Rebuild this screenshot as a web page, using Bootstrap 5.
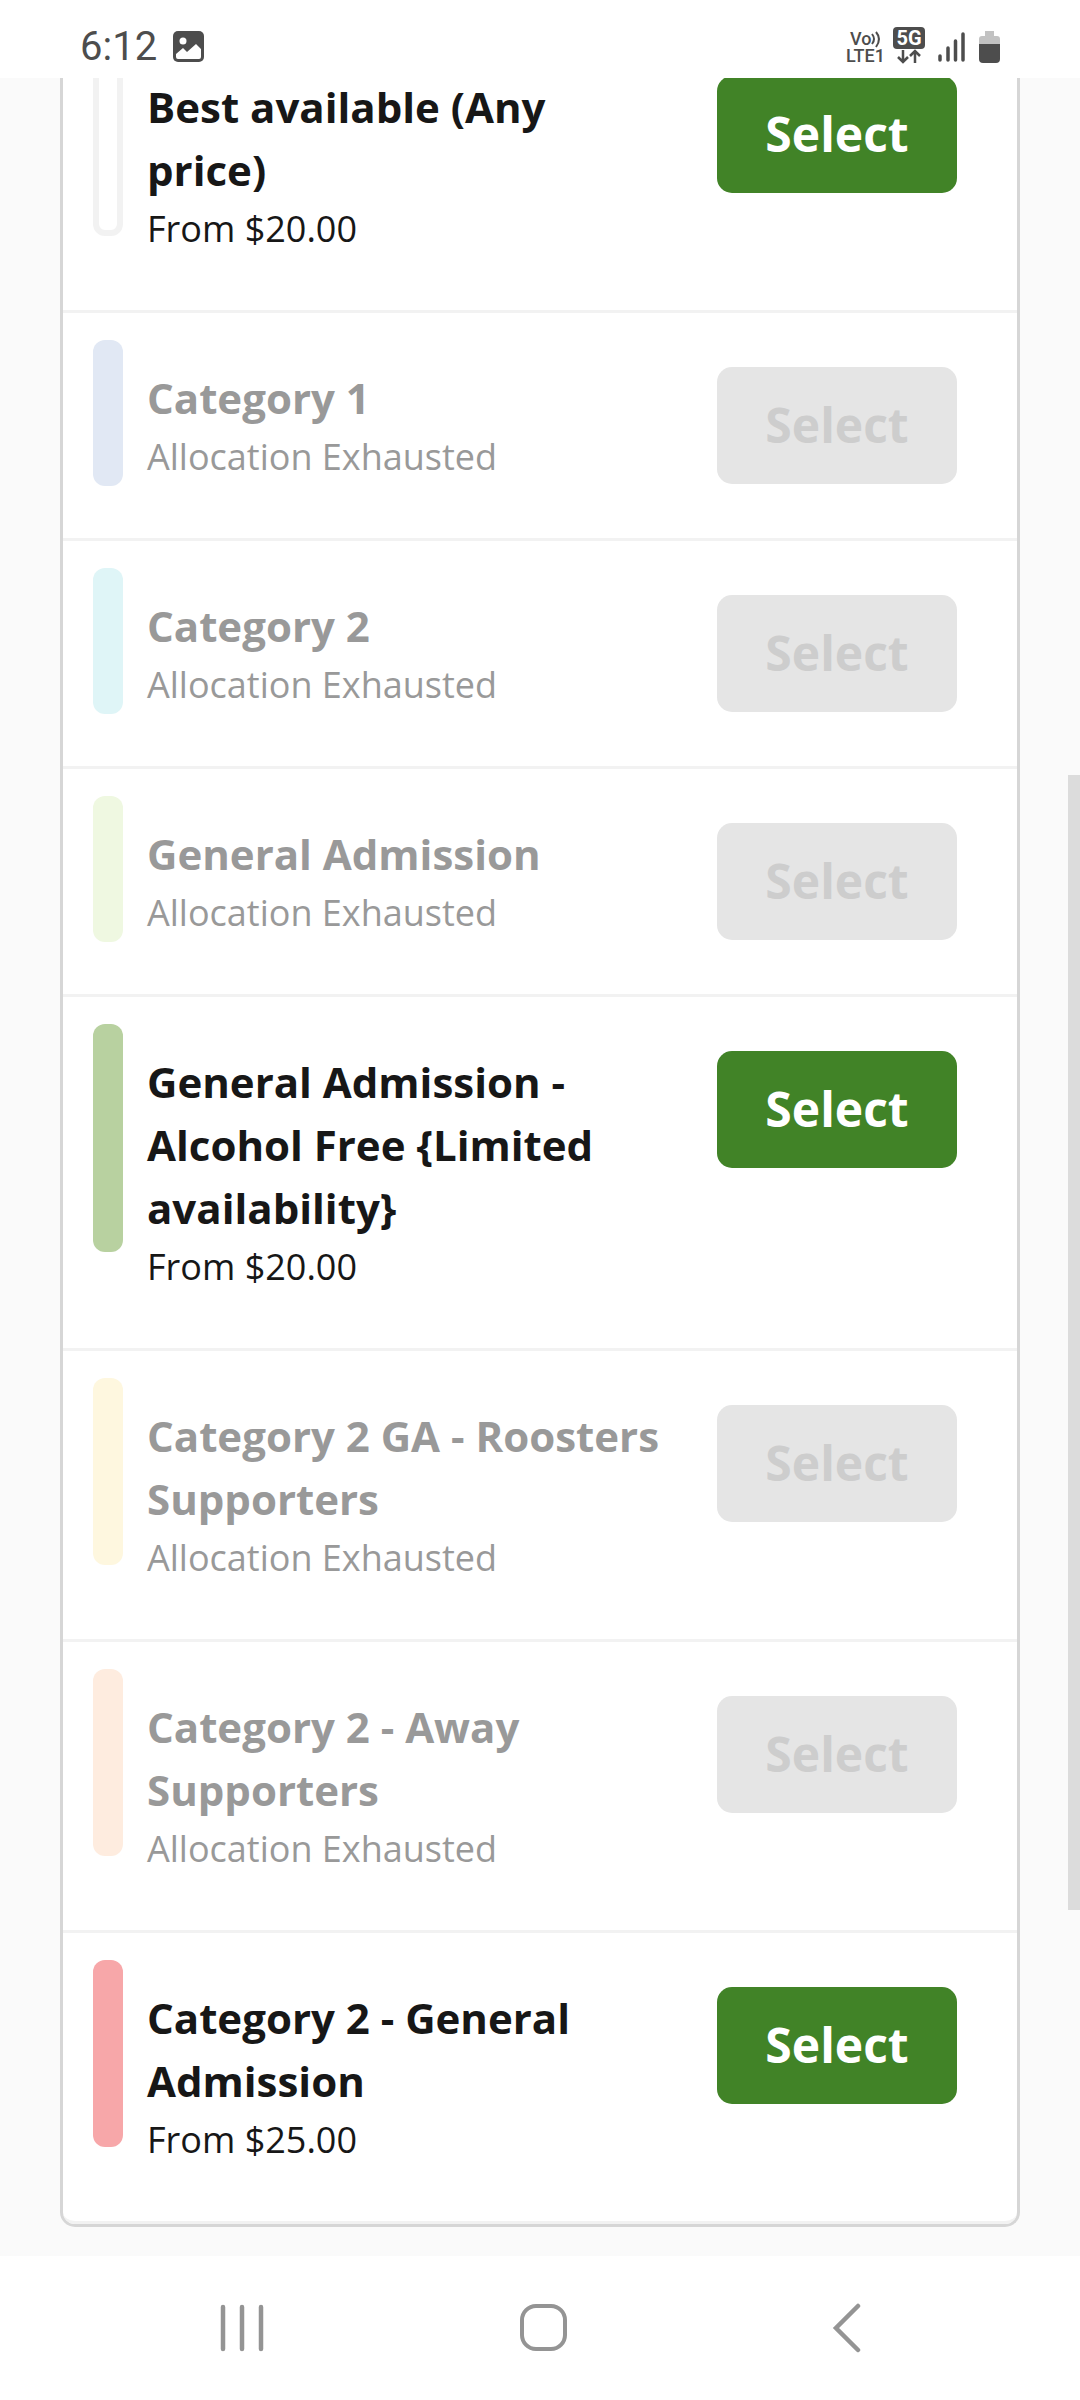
<!DOCTYPE html>
<html lang="en">
<head>
<meta charset="utf-8">
<meta name="viewport" content="width=device-width, initial-scale=1">
<title>Select tickets</title>
<link href="https://cdn.jsdelivr.net/npm/bootstrap@5.3.0/dist/css/bootstrap.min.css" rel="stylesheet">
<style>
  body { font-family: "Open Sans", "Noto Sans", sans-serif; color: #171717; }
  .status-bar { height: 78px; padding: 0 78px 12px 80px; color: #4d4d4d; }
  .clock { font-family: Roboto, sans-serif; font-size: 40px; line-height: 38px; font-weight: 400; }
  .page-area { display: flow-root; background: #fafafa; padding: 0 60px 29px; }
  /* the list is scrolled part of the way under the status bar */
  .ticket-list { margin-top: -56px; border: 3px solid #d6d6d6; border-top: 0; border-radius: 0 0 15px 15px; background: #fff; }
  .ticket { border-bottom: 3px solid #f2f2f2; padding: 0 60px 0 30px; }
  .ticket:last-child { border-radius: 0 0 12px 12px; }
  .swatch { width: 30px; height: 65%; margin-top: 27px; border-radius: 12px; background: var(--tone); }
  .swatch-empty { border: 6px solid #f2f2f2; }
  .ticket-text { padding: 53px 48px 53px 24px; min-width: 0; }
  .ticket-name { font-size: 42px; line-height: 63px; font-weight: 700; }
  .ticket-note { font-size: 36px; line-height: 56px; }
  .sold-out { color: #999; }
  .btn-select { width: 240px; height: 117px; margin-top: 54px; padding: 0 0 2px; border: 0; border-radius: 15px; font-size: 48px; line-height: 72px; font-weight: 700;
    --bs-btn-color: #fff; --bs-btn-bg: #418327; --bs-btn-hover-color: #fff; --bs-btn-hover-bg: #376f21;
    --bs-btn-active-color: #fff; --bs-btn-active-bg: #376f21;
    --bs-btn-disabled-color: #cdcdcd; --bs-btn-disabled-bg: #e5e5e5; --bs-btn-disabled-opacity: 1; }
  .scroll-thumb { top: 697px; right: 0; width: 12px; height: 1135px; background: #dcdcdc; }
  .nav-keys { height: 144px; padding: 0 82px 0 91px; }
  .nav-keys svg, .status-bar svg { display: block; }
</style>
</head>
<body class="bg-white">
<header class="status-bar d-flex align-items-end justify-content-between position-relative z-1 bg-white">
  <div class="d-flex align-items-center">
    <span class="clock">6:12</span>
    <svg class="ms-3" width="32" height="32" viewBox="0 0 32 32" aria-hidden="true">
      <rect width="31" height="31" x="0" y="0" rx="5" fill="#4d4d4d"/>
      <circle cx="10" cy="10" r="3.5" fill="#fff"/>
      <path d="M3 23l7-6 4 4 9-8 5 5v8a2 2 0 0 1-2 2H5a2 2 0 0 1-2-2z" fill="#fff"/>
    </svg>
  </div>
  <svg width="156" height="40" viewBox="846 26 156 40" font-family="Roboto, sans-serif" fill="#4d4d4d" role="img" aria-label="VoLTE, 5G, signal, battery">
    <text x="850" y="45" font-size="18" font-weight="500">Vo</text>
    <text x="846" y="62" font-size="18" font-weight="500">LTE1</text>
    <g fill="none" stroke="#4d4d4d" stroke-width="2">
      <path d="M872 34q4 5 0 10M876 32q6 7 0 15"/>
    </g>
    <rect x="893" y="27" width="32" height="22" rx="4"/>
    <text x="909" y="45" font-size="20" font-weight="700" fill="#fff" text-anchor="middle">5G</text>
    <path d="M903 50v12M898 57l5 5 5-5M915 63V51M910 56l5-5 5 5" fill="none" stroke="#4d4d4d" stroke-width="2.500"/>
    <path d="M940 56v4M948 48v12M955.500 41v19M963 34v26" stroke="#4d4d4d" stroke-width="3.500" stroke-linecap="round"/>
    <path d="M979 45v-6q0-3 3-3h3v-5h9v5h3q3 0 3 3v6z" fill="#c2c2c2"/>
    <path d="M979 44h21v15q0 4-4 4h-13q-4 0-4-4z"/>
  </svg>
</header>

<main class="page-area position-relative">
  <div class="ticket-list">
    <div class="ticket d-flex">
      <div><div class="swatch swatch-empty"></div></div>
      <div class="ticket-text flex-grow-1"><div class="ticket-name">Best available (Any price)</div><div class="ticket-note">From $20.00</div></div>
      <button type="button" class="btn btn-select flex-shrink-0">Select</button>
    </div>
    <div class="ticket sold-out d-flex">
      <div><div class="swatch" style="--tone:#e1e8f4"></div></div>
      <div class="ticket-text flex-grow-1"><div class="ticket-name">Category 1</div><div class="ticket-note">Allocation Exhausted</div></div>
      <button type="button" class="btn btn-select flex-shrink-0" disabled>Select</button>
    </div>
    <div class="ticket sold-out d-flex">
      <div><div class="swatch" style="--tone:#dff5f7"></div></div>
      <div class="ticket-text flex-grow-1"><div class="ticket-name">Category 2</div><div class="ticket-note">Allocation Exhausted</div></div>
      <button type="button" class="btn btn-select flex-shrink-0" disabled>Select</button>
    </div>
    <div class="ticket sold-out d-flex">
      <div><div class="swatch" style="--tone:#eff8e1"></div></div>
      <div class="ticket-text flex-grow-1"><div class="ticket-name">General Admission</div><div class="ticket-note">Allocation Exhausted</div></div>
      <button type="button" class="btn btn-select flex-shrink-0" disabled>Select</button>
    </div>
    <div class="ticket d-flex">
      <div><div class="swatch" style="--tone:#b8d1a0"></div></div>
      <div class="ticket-text flex-grow-1"><div class="ticket-name">General Admission - Alcohol Free {Limited availability}</div><div class="ticket-note">From $20.00</div></div>
      <button type="button" class="btn btn-select flex-shrink-0">Select</button>
    </div>
    <div class="ticket sold-out d-flex">
      <div><div class="swatch" style="--tone:#fef7df"></div></div>
      <div class="ticket-text flex-grow-1"><div class="ticket-name">Category 2 GA - Roosters Supporters</div><div class="ticket-note">Allocation Exhausted</div></div>
      <button type="button" class="btn btn-select flex-shrink-0" disabled>Select</button>
    </div>
    <div class="ticket sold-out d-flex">
      <div><div class="swatch" style="--tone:#feecdf"></div></div>
      <div class="ticket-text flex-grow-1"><div class="ticket-name">Category 2 - Away Supporters</div><div class="ticket-note">Allocation Exhausted</div></div>
      <button type="button" class="btn btn-select flex-shrink-0" disabled>Select</button>
    </div>
    <div class="ticket d-flex">
      <div><div class="swatch" style="--tone:#f7a7a9"></div></div>
      <div class="ticket-text flex-grow-1"><div class="ticket-name">Category 2 - General Admission</div><div class="ticket-note">From $25.00</div></div>
      <button type="button" class="btn btn-select flex-shrink-0">Select</button>
    </div>
  </div>
  <div class="scroll-thumb position-absolute"></div>
</main>

<nav class="nav-keys d-flex bg-white" aria-label="System navigation">
  <button type="button" class="btn border-0 flex-fill d-flex align-items-center justify-content-center" aria-label="Recent apps">
    <svg width="48" height="48" viewBox="0 0 48 48" stroke="#949494" stroke-width="4.500" stroke-linecap="round"><path d="M5 3v42M24 3v42M43 3v42"/></svg>
  </button>
  <button type="button" class="btn border-0 flex-fill d-flex align-items-center justify-content-center" aria-label="Home">
    <svg width="48" height="48" viewBox="0 0 48 48" fill="none" stroke="#949494" stroke-width="4"><rect x="2" y="2" width="43" height="43" rx="14"/></svg>
  </button>
  <button type="button" class="btn border-0 flex-fill d-flex align-items-center justify-content-center" aria-label="Back">
    <svg width="48" height="50" viewBox="0 0 48 50" fill="none" stroke="#949494" stroke-width="4.500" stroke-linecap="round"><path d="M35 3L13 25l22 22"/></svg>
  </button>
</nav>
<script src="https://cdn.jsdelivr.net/npm/bootstrap@5.3.0/dist/js/bootstrap.bundle.min.js"></script>
</body>
</html>
